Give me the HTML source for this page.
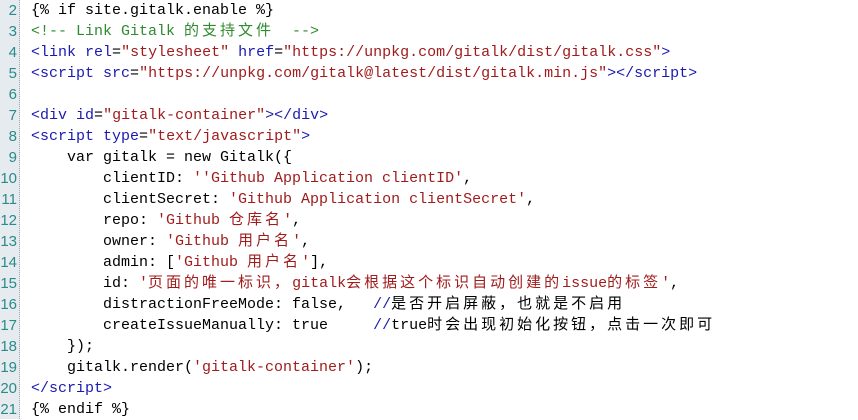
<!DOCTYPE html>
<html><head><meta charset="utf-8"><style>
body{margin:0;width:858px;height:419px;background:#fff;overflow:hidden;position:relative}
#g{position:absolute;left:0;top:0;width:19px;height:419px;background:#e6ebf0;border-right:1px dotted #9aa8b0}
.l{position:absolute;left:0;height:21px;line-height:21px;font-family:"Liberation Mono",monospace;font-size:15px;white-space:pre;color:#000}
.n{position:absolute;width:17px;text-align:right;left:0;color:#2b8a8a;font-family:"Liberation Sans",sans-serif;font-size:15px}
.c{position:absolute;left:31px}
.t{color:#1a1ab0}.a{color:#1a1ab0}.s{color:#a01c1c}.m{color:#2e8b2e}
i{font-style:normal;font-family:"Noto Sans CJK SC",sans-serif;letter-spacing:3px;font-size:15px;line-height:0}
</style></head><body>
<div id="g"></div>
<div class="l" style="top:0"><span class="n">2</span><span class="c">{% if site.gitalk.enable %}</span></div>
<div class="l" style="top:21px"><span class="n">3</span><span class="c m">&lt;!-- Link Gitalk <i>的支持文件</i>  --&gt;</span></div>
<div class="l" style="top:42px"><span class="n">4</span><span class="c"><span class="t">&lt;link</span> <span class="a">rel</span>=<span class="s">"stylesheet"</span> <span class="a">href</span>=<span class="s">"https://unpkg.com/gitalk/dist/gitalk.css"</span><span class="t">&gt;</span></span></div>
<div class="l" style="top:63px"><span class="n">5</span><span class="c"><span class="t">&lt;script</span> <span class="a">src</span>=<span class="s">"https://unpkg.com/gitalk@latest/dist/gitalk.min.js"</span><span class="t">&gt;&lt;/script&gt;</span></span></div>
<div class="l" style="top:84px"><span class="n">6</span></div>
<div class="l" style="top:105px"><span class="n">7</span><span class="c"><span class="t">&lt;div</span> <span class="a">id</span>=<span class="s">"gitalk-container"</span><span class="t">&gt;&lt;/div&gt;</span></span></div>
<div class="l" style="top:126px"><span class="n">8</span><span class="c"><span class="t">&lt;script</span> <span class="a">type</span>=<span class="s">"text/javascript"</span><span class="t">&gt;</span></span></div>
<div class="l" style="top:147px"><span class="n">9</span><span class="c">    var gitalk = new Gitalk({</span></div>
<div class="l" style="top:168px"><span class="n">10</span><span class="c">        clientID: <span class="s">''Github Application clientID'</span>,</span></div>
<div class="l" style="top:189px"><span class="n">11</span><span class="c">        clientSecret: <span class="s">'Github Application clientSecret'</span>,</span></div>
<div class="l" style="top:210px"><span class="n">12</span><span class="c">        repo: <span class="s">'Github <i>仓库名</i>'</span>,</span></div>
<div class="l" style="top:231px"><span class="n">13</span><span class="c">        owner: <span class="s">'Github <i>用户名</i>'</span>,</span></div>
<div class="l" style="top:252px"><span class="n">14</span><span class="c">        admin: [<span class="s">'Github <i>用户名</i>'</span>],</span></div>
<div class="l" style="top:273px"><span class="n">15</span><span class="c">        id: <span class="s">'<i>页面的唯一标识，</i>gitalk<i>会根据这个标识自动创建的</i>issue<i>的标签</i>'</span>,</span></div>
<div class="l" style="top:294px"><span class="n">16</span><span class="c">        distractionFreeMode: false,   <span class="t">//</span><i>是否开启屏蔽，也就是不启用</i></span></div>
<div class="l" style="top:315px"><span class="n">17</span><span class="c">        createIssueManually: true     <span class="t">//</span>true<i>时会出现初始化按钮，点击一次即可</i></span></div>
<div class="l" style="top:336px"><span class="n">18</span><span class="c">    });</span></div>
<div class="l" style="top:357px"><span class="n">19</span><span class="c">    gitalk.render(<span class="s">'gitalk-container'</span>);</span></div>
<div class="l" style="top:378px"><span class="n">20</span><span class="c t">&lt;/script&gt;</span></div>
<div class="l" style="top:399px"><span class="n">21</span><span class="c">{% endif %}</span></div>
</body></html>
